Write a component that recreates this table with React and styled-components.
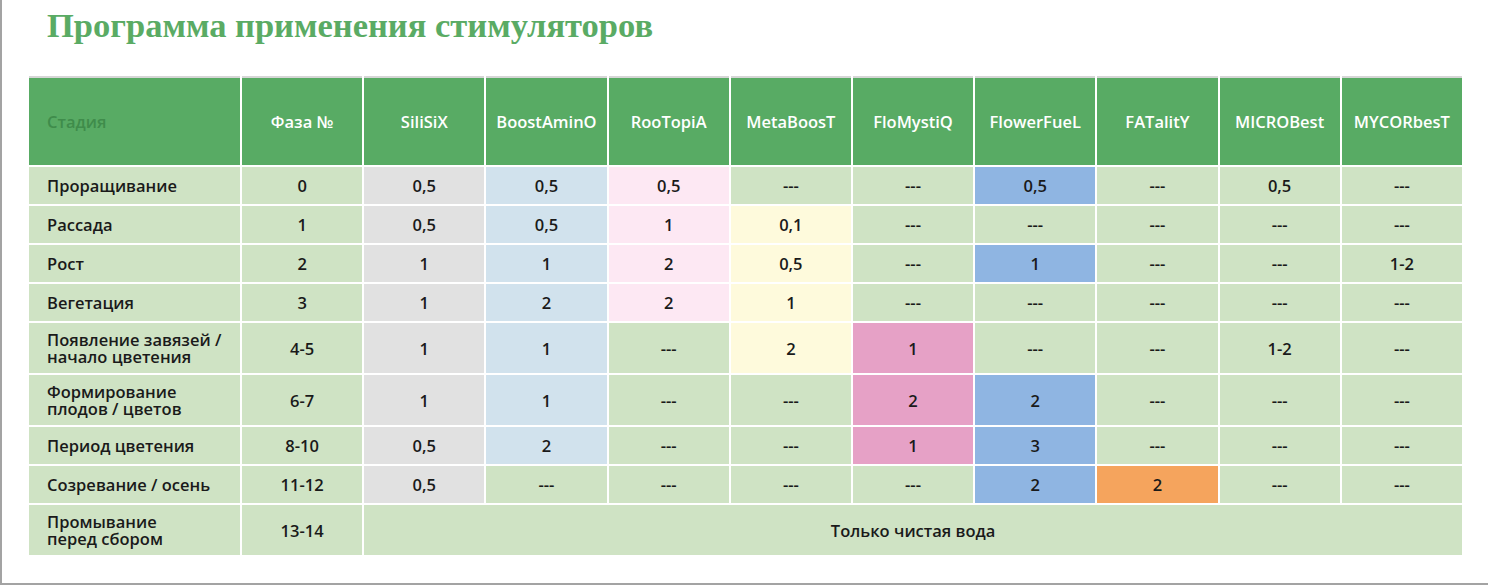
import React from 'react';
import styled, { createGlobalStyle } from 'styled-components';

const GlobalStyle = createGlobalStyle`
  html, body {
    margin: 0;
    padding: 0;
    background: #ffffff;
  }
`;

const Frame = styled.div`
  box-sizing: border-box;
  width: 1488px;
  height: 585px;
  border-left: 2px solid #a3a3a3;
  border-bottom: 2px solid #a3a3a3;
  padding: 4px 0 0 25px;
  display: flex;
  flex-direction: column;
`;

const Title = styled.h1`
  margin: 0 0 0 20px;
  height: 72px;
  font-family: "Liberation Serif", "DejaVu Serif", serif;
  font-weight: 700;
  font-size: 34.5px;
  line-height: 42px;
  color: #5aab64;
`;

const Table = styled.table`
  width: 1437px;
  table-layout: fixed;
  border-collapse: collapse;
  border: 2px solid #d6d6d6;
`;

const Head = styled.th`
  height: 87px;
  padding: 0 4px;
  background: #58ab64;
  font-family: "Open Sans", "Noto Sans", sans-serif;
  font-size: 16.5px;
  font-weight: 600;
  color: ${p => (p.$dim ? '#3f8c4b' : '#ffffff')};
  text-align: ${p => (p.$left ? 'left' : 'center')};
  padding-left: ${p => (p.$left ? '18px' : '4px')};
  border: 2px solid #ffffff;
  border-top: none;
`;

const tones = {
  green: '#cfe3c4',
  gray: '#e1e1e1',
  sky: '#d1e2ed',
  blush: '#fde8f3',
  cream: '#fefadc',
  pink: '#e6a1c6',
  blue: '#8fb5e2',
  orange: '#f5a45d',
};

const Cell = styled.td`
  height: ${p => (p.$tall ? '50px' : '37px')};
  padding: 0 4px;
  background: ${p => tones[p.$tone || 'green']};
  font-family: "Open Sans", "Noto Sans", sans-serif;
  font-size: 16.5px;
  font-weight: 600;
  color: #1a1a1a;
  text-align: ${p => (p.$left ? 'left' : 'center')};
  padding-left: ${p => (p.$left ? '18px' : '4px')};
  line-height: 17px;
  border: 2px solid #ffffff;
`;

const products = ['SiliSiX', 'BoostAminO', 'RooTopiA', 'MetaBoosT', 'FloMystiQ', 'FlowerFueL', 'FATalitY', 'MICROBest', 'MYCORbesT'];

const palette = ['gray', 'sky', 'blush', 'cream', 'pink', 'blue', 'orange', 'green', 'green'];

const D = '---';

const rows = [
  { stage: 'Проращивание', phase: '0', values: ['0,5', '0,5', '0,5', D, D, '0,5', D, '0,5', D] },
  { stage: 'Рассада', phase: '1', values: ['0,5', '0,5', '1', '0,1', D, D, D, D, D] },
  { stage: 'Рост', phase: '2', values: ['1', '1', '2', '0,5', D, '1', D, D, '1-2'] },
  { stage: 'Вегетация', phase: '3', values: ['1', '2', '2', '1', D, D, D, D, D] },
  { stage: ['Появление завязей /', 'начало цветения'], phase: '4-5', values: ['1', '1', D, '2', '1', D, D, '1-2', D] },
  { stage: ['Формирование', 'плодов / цветов'], phase: '6-7', values: ['1', '1', D, D, '2', '2', D, D, D] },
  { stage: 'Период цветения', phase: '8-10', values: ['0,5', '2', D, D, '1', '3', D, D, D] },
  { stage: 'Созревание / осень', phase: '11-12', values: ['0,5', D, D, D, D, '2', '2', D, D] },
];

const StageLabel = ({ stage }) =>
  Array.isArray(stage) ? (
    <>
      {stage[0]}
      <br />
      {stage[1]}
    </>
  ) : (
    stage
  );

export default function App() {
  return (
    <>
      <GlobalStyle />
      <Frame>
        <Title>Программа применения стимуляторов</Title>
        <Table>
          <colgroup>
            <col style={{ width: 213 }} />
            {Array.from({ length: 10 }).map((_, i) => (
              <col key={i} />
            ))}
          </colgroup>
          <thead>
            <tr>
              <Head $left $dim>Стадия</Head>
              <Head>Фаза №</Head>
              {products.map(name => (
                <Head key={name}>{name}</Head>
              ))}
            </tr>
          </thead>
          <tbody>
            {rows.map(row => {
              const tall = Array.isArray(row.stage);
              return (
                <tr key={row.phase}>
                  <Cell $left $tall={tall}>
                    <StageLabel stage={row.stage} />
                  </Cell>
                  <Cell $tall={tall}>{row.phase}</Cell>
                  {row.values.map((v, i) => (
                    <Cell key={i} $tall={tall} $tone={v === D ? 'green' : palette[i]}>
                      {v}
                    </Cell>
                  ))}
                </tr>
              );
            })}
            <tr>
              <Cell $left $tall>
                Промывание
                <br />
                перед сбором
              </Cell>
              <Cell $tall>13-14</Cell>
              <Cell $tall colSpan={9}>
                Только чистая вода
              </Cell>
            </tr>
          </tbody>
        </Table>
      </Frame>
    </>
  );
}
